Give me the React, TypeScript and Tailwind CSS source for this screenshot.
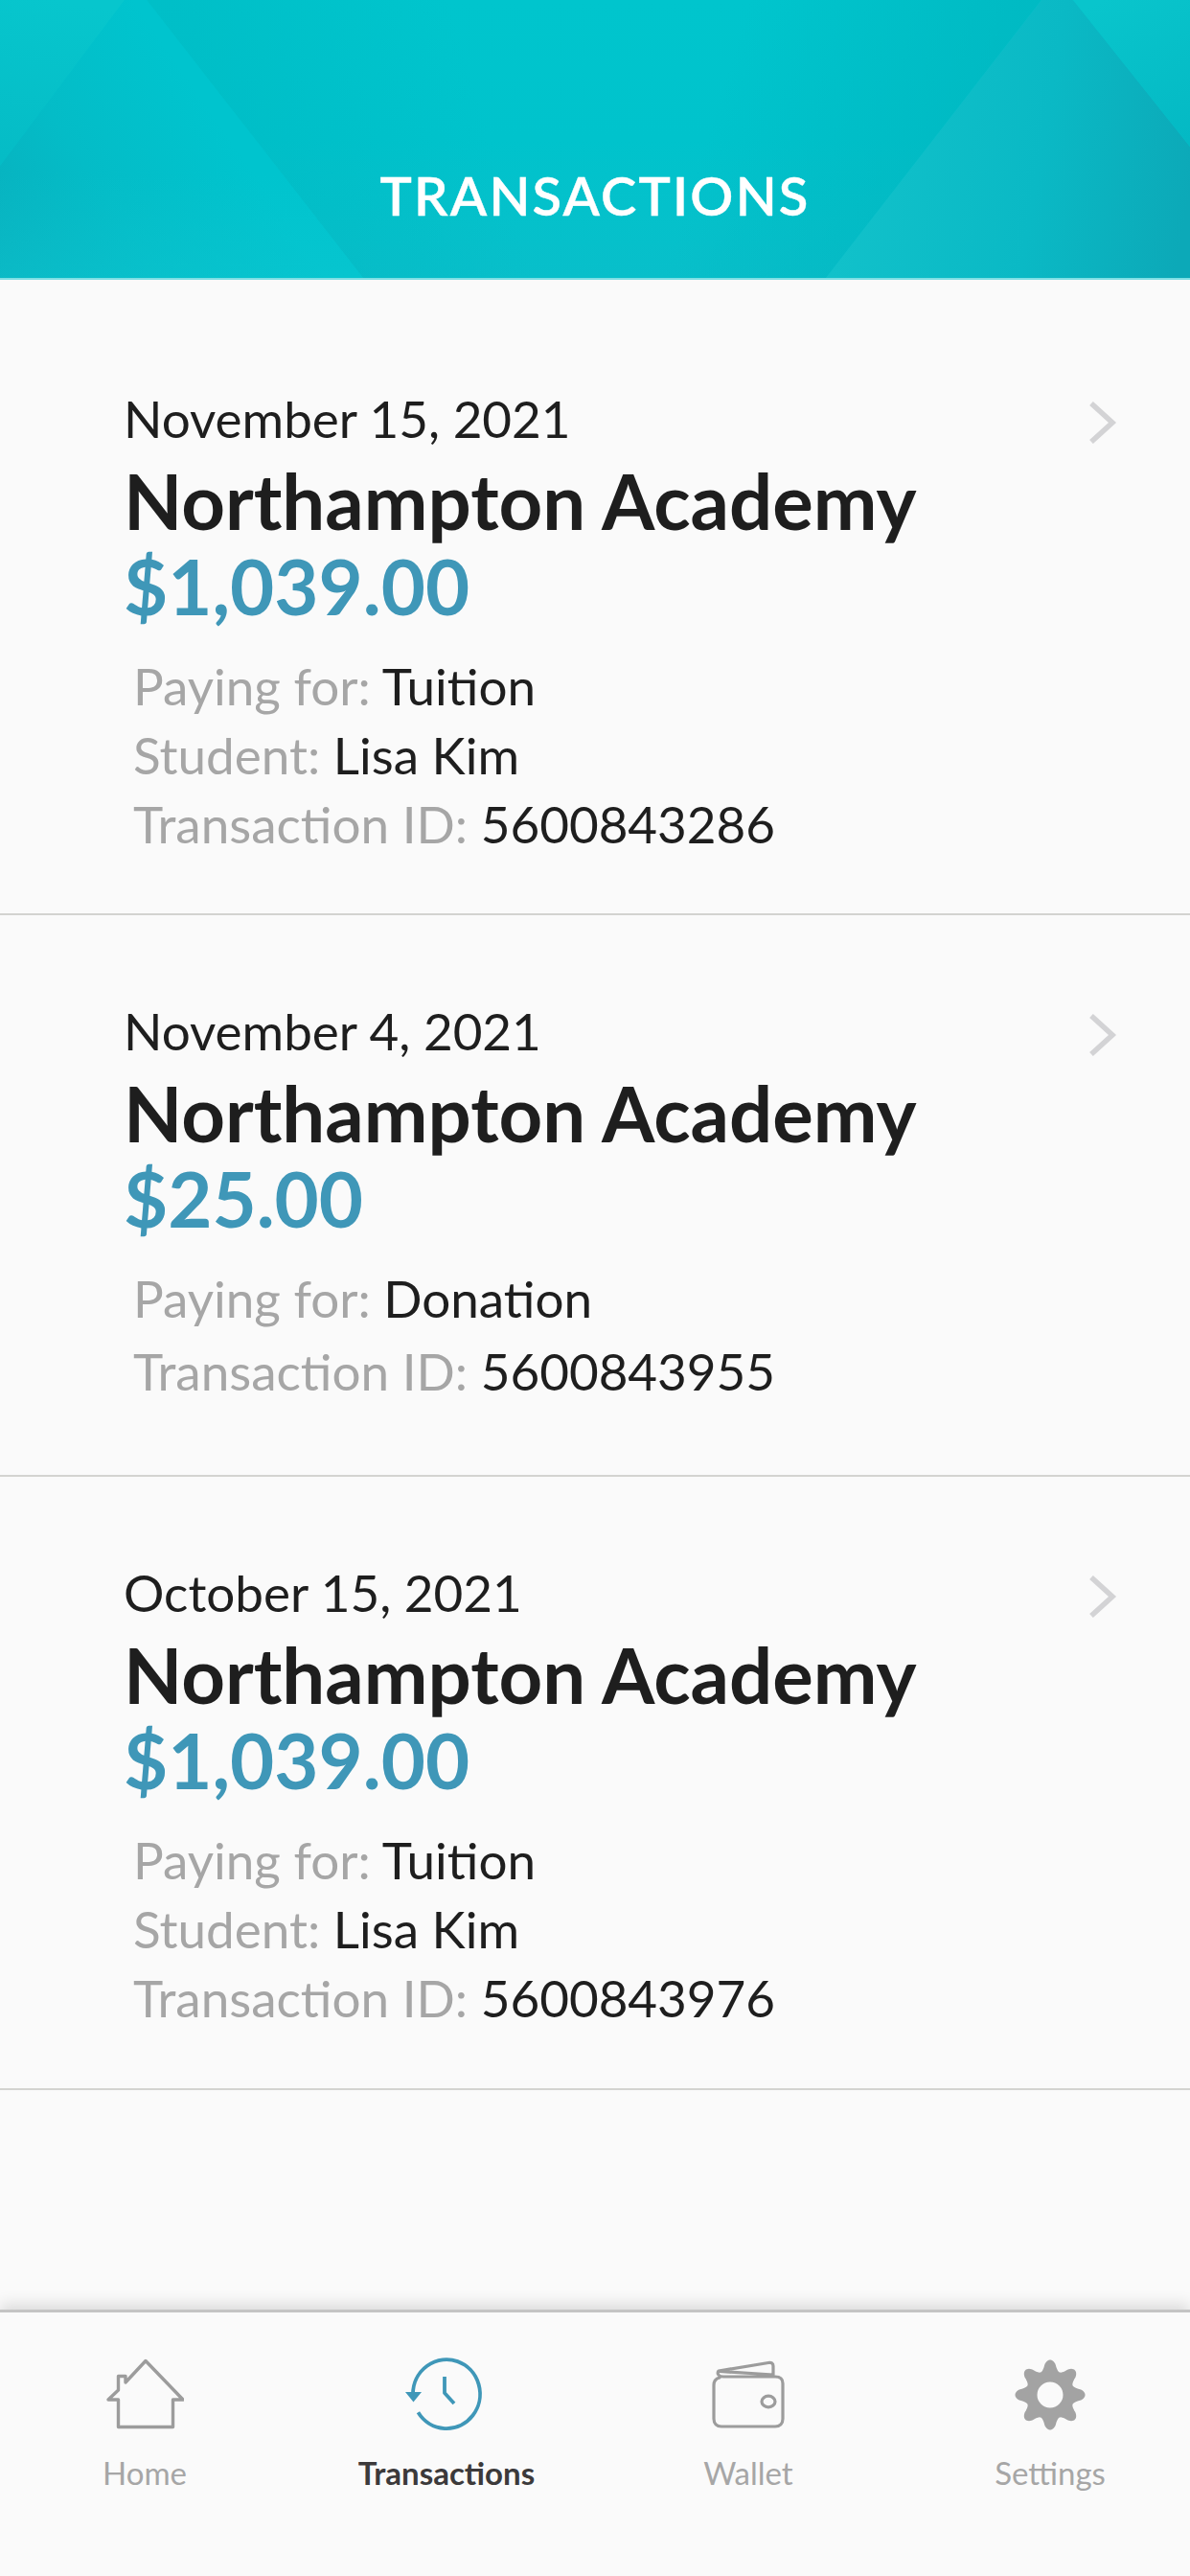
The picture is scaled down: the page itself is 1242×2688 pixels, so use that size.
const gearPath = () => {
  const cx = 40, cy = 40, pts: string[] = [];
  for (let i = 0; i < 240; i++) {
    const t = (i / 240) * Math.PI * 2;
    const w = Math.cos(8 * t);
    const r = 31 + 5.5 * (w > 0 ? Math.pow(w, 0.8) : -Math.pow(-w, 0.8));
    pts.push(`${(cx + r * Math.sin(t)).toFixed(2)} ${(cy - r * Math.cos(t)).toFixed(2)}`);
  }
  return "M" + pts.join("L") + "Z";
};

const HomeIcon = () => (
  <svg width="82" height="76" viewBox="0 0 82 76" fill="none" stroke="#9c9c9c" strokeWidth="3.4" strokeLinejoin="round" strokeLinecap="round">
    <path d="M42 2.5 L81 43 H70.5 V71.5 H13.5 V43 H3 L13.5 33 V18.5 H21 V25 Z" />
  </svg>
);

const ClockIcon = () => (
  <svg width="88" height="82" viewBox="0 0 88 82" fill="none" stroke="#3f97b8" strokeWidth="3.8">
    <path d="M9 40 A 35 36 0 1 1 14.4 59.3" />
    <path d="M1 38 H18 L9.5 48.5 Z" fill="#3f97b8" stroke="none" />
    <path d="M42 22 V39 L52 50" strokeLinejoin="round" />
  </svg>
);

const WalletIcon = () => (
  <svg width="78" height="74" viewBox="0 0 78 74" fill="none" stroke="#9c9c9c" strokeWidth="3.2" strokeLinejoin="round" strokeLinecap="round">
    <path d="M9 19 C5 20 3 23 3 27 V62 C3 67 6 70 11 70 H67 C72 70 75 67 75 62 V25 C75 20 72 18 67 18 H13 C8 18 6 15 8 12 L60 3.5 C63 3 65 4 65 7 V16 M9 12.5 L65 16" />
    <ellipse cx="60" cy="44" rx="7" ry="5.8" />
  </svg>
);

const GearIcon = () => (
  <svg width="80" height="80" viewBox="0 0 80 80">
    <path fillRule="evenodd" fill="#a3a3a3" d={gearPath() + " M26.5 40 A13.5 13.5 0 1 0 53.5 40 A13.5 13.5 0 1 0 26.5 40 Z"} />
  </svg>
);

const Chevron = () => (
  <svg width="30" height="44" viewBox="0 0 30 44" fill="none" stroke="#d3d3d5" strokeWidth="5.5" className="mt-[18px]">
    <path d="M3 2 L25 22 L3 42" />
  </svg>
);

type Detail = [string, string];
const Row = ({ date, amount, details, gap, bottom }: { date: string; amount: string; details: Detail[]; gap: string; bottom: string }) => (
  <div className={`border-b-2 border-[#d3d3d0] pl-[129px] pr-[76px] pt-[85px] ${bottom}`}>
    <div className="flex items-start justify-between">
      <div className="flex flex-col">
        <div className="h-[72px] text-[53px] leading-[72px] text-[#1e1e1e]">{date}</div>
        <div className="mt-[3px] h-[93px] text-[79.7px] font-bold leading-[93px] text-[#1e1e1e]">Northampton Academy</div>
        <div className="mt-[2px] h-[80px] text-[79.7px] font-bold leading-[80px] text-[#3f97b8]">{amount}</div>
      </div>
      <Chevron />
    </div>
    <div className={`ml-[10px] mt-[29px] flex flex-col ${gap}`}>
      {details.map(([k, v]) => (
        <div key={k} className="h-[72px] text-[53px] leading-[72px] text-[#1e1e1e]">
          <span className="text-[#a6a6a6]">{k}:</span> {v}
        </div>
      ))}
    </div>
  </div>
);

const Tab = ({ label, active, icon }: { label: string; active?: boolean; icon: React.ReactNode }) => (
  <div className="flex w-[200px] flex-col items-center">
    <div className="flex h-[84px] items-center justify-center">{icon}</div>
    <div className={`mt-[17px] text-[33px] leading-[44px] ${active ? "font-bold text-[#3c3a3b]" : "text-[#a6a6a6]"}`}>{label}</div>
  </div>
);

export default function App() {
  return (
    <div className="flex h-[2688px] w-[1242px] flex-col overflow-hidden bg-[#fafafa] font-['Lato',sans-serif]">
      <header className="relative h-[292px] shrink-0 overflow-hidden border-b-2 border-[#7fdfe4] bg-[#03c3cc]">
        <svg className="absolute inset-0" width="1242" height="290" viewBox="0 0 1242 290">
          <defs>
            <linearGradient id="cm" x1="0" y1="0" x2="0" y2="1">
              <stop offset="0" stopColor="#00c5cd" />
              <stop offset="0.5" stopColor="#00c3cc" />
              <stop offset="1" stopColor="#08bfca" />
            </linearGradient>
            <linearGradient id="sl" gradientUnits="userSpaceOnUse" x1="190" y1="20" x2="450" y2="-60">
              <stop offset="0" stopColor="#00b4be" stopOpacity="0.35" />
              <stop offset="1" stopColor="#00b4be" stopOpacity="0" />
            </linearGradient>
            <linearGradient id="sr" gradientUnits="userSpaceOnUse" x1="1060" y1="20" x2="800" y2="-60">
              <stop offset="0" stopColor="#00b2bc" stopOpacity="0.55" />
              <stop offset="1" stopColor="#00b2bc" stopOpacity="0" />
            </linearGradient>
            <linearGradient id="lo" gradientUnits="userSpaceOnUse" x1="0" y1="290" x2="230" y2="130">
              <stop offset="0" stopColor="#09aebc" />
              <stop offset="0.5" stopColor="#04bcc7" />
              <stop offset="1" stopColor="#00c4ce" />
            </linearGradient>
            <linearGradient id="lb" gradientUnits="userSpaceOnUse" x1="0" y1="180" x2="0" y2="290">
              <stop offset="0" stopColor="#0cc6d0" stopOpacity="0" />
              <stop offset="1" stopColor="#0cc6d0" stopOpacity="0.5" />
            </linearGradient>
            <linearGradient id="lc" gradientUnits="userSpaceOnUse" x1="60" y1="0" x2="30" y2="170">
              <stop offset="0" stopColor="#07c6cd" />
              <stop offset="1" stopColor="#05bcc6" />
            </linearGradient>
            <linearGradient id="ro" gradientUnits="userSpaceOnUse" x1="880" y1="210" x2="1230" y2="270">
              <stop offset="0" stopColor="#11c1ca" />
              <stop offset="0.55" stopColor="#0ab9c5" />
              <stop offset="1" stopColor="#0ca9b8" />
            </linearGradient>
            <linearGradient id="rc" gradientUnits="userSpaceOnUse" x1="1150" y1="0" x2="1235" y2="150">
              <stop offset="0" stopColor="#09c5cc" />
              <stop offset="1" stopColor="#04b9c4" />
            </linearGradient>
          </defs>
          <rect width="1242" height="290" fill="url(#cm)" />
          <polygon points="153,0 640,0 700,290 379,290" fill="url(#sl)" />
          <polygon points="1087,0 640,0 600,290 862,290" fill="url(#sr)" />
          <polygon points="0,0 130,0 0,173" fill="url(#lc)" />
          <polygon points="130,0 153,0 379,290 0,290 0,173" fill="url(#lo)" />
          <polygon points="130,0 153,0 379,290 0,290 0,173" fill="url(#lb)" />
          <polygon points="1087,0 1120,0 1242,153 1242,290 862,290" fill="url(#ro)" />
          <polygon points="1120,0 1242,0 1242,153" fill="url(#rc)" />
        </svg>
        <div className="absolute inset-x-0 top-[170px] text-center text-[56px] font-semibold leading-[68px] tracking-[2.2px] text-white [-webkit-text-stroke:0.4px_white]">TRANSACTIONS</div>
      </header>

      <main className="flex-1 pt-[24px]">
        <Row bottom="pb-[57px]" date="November 15, 2021" amount="$1,039.00" gap="" details={[["Paying for", "Tuition"], ["Student", "Lisa Kim"], ["Transaction ID", "5600843286"]]} />
        <Row bottom="pb-[72px]" date="November 4, 2021" amount="$25.00" gap="gap-[4px]" details={[["Paying for", "Donation"], ["Transaction ID", "5600843955"]]} />
        <Row bottom="pb-[58px]" date="October 15, 2021" amount="$1,039.00" gap="" details={[["Paying for", "Tuition"], ["Student", "Lisa Kim"], ["Transaction ID", "5600843976"]]} />
      </main>

      <nav className="relative flex h-[278px] shrink-0 items-start justify-between border-t-[3px] border-[#c4c4c4] bg-[#fafafa] pl-[51px] pr-[46px] pt-[44px] shadow-[0_-6px_14px_rgba(0,0,0,0.12)]">
        <Tab label="Home" icon={<HomeIcon />} />
        <Tab label="Transactions" active icon={<ClockIcon />} />
        <Tab label="Wallet" icon={<WalletIcon />} />
        <Tab label="Settings" icon={<GearIcon />} />
      </nav>
    </div>
  );
}
